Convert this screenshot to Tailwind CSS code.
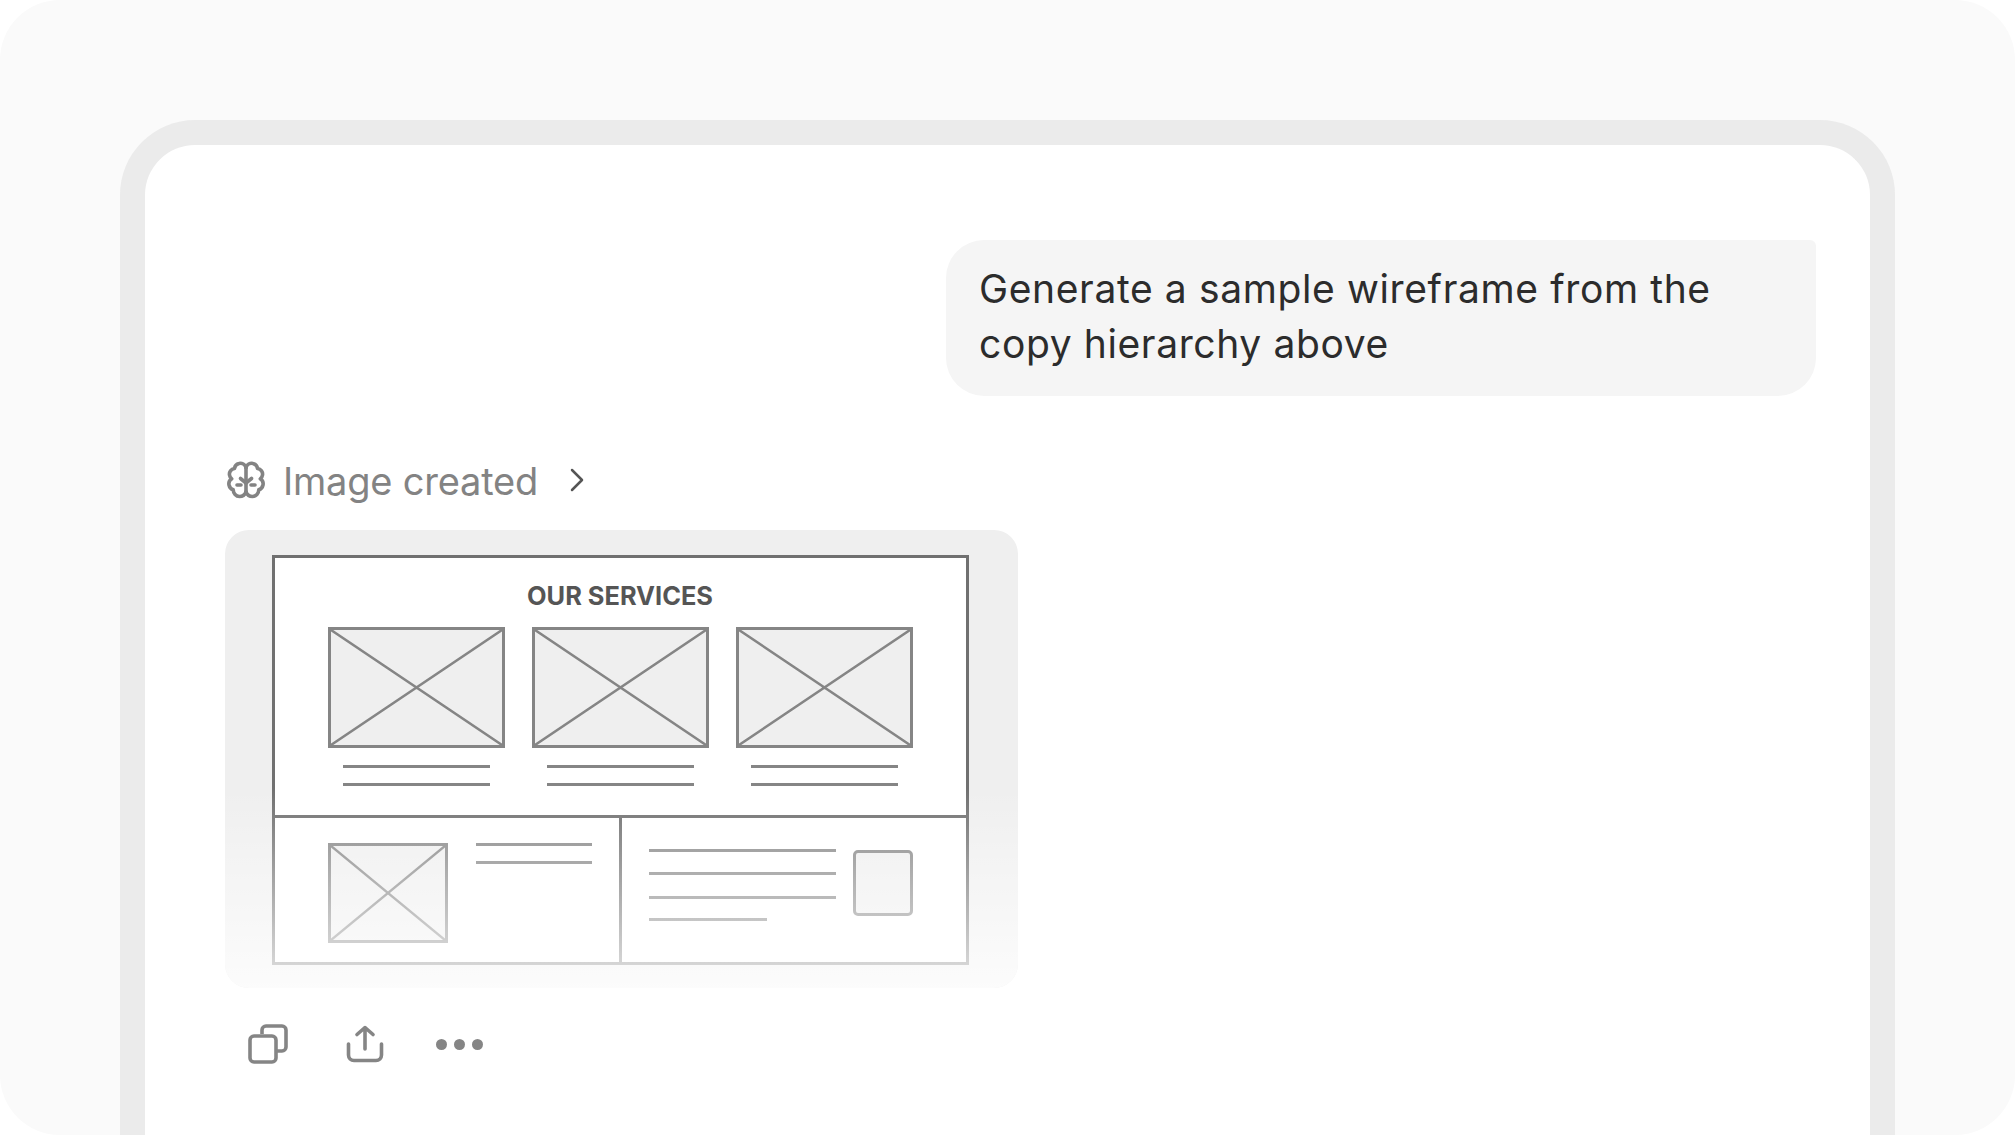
<!DOCTYPE html>
<html lang="en">
<head>
    <meta charset="UTF-8">
    <title>Image created</title>
    <script src="https://cdn.jsdelivr.net/npm/@tailwindcss/browser@4"></script>
</head>
<body class="bg-white font-['Inter',sans-serif] overflow-hidden">
    <div class="w-[2015px] h-[1135px] bg-[#fafafa] rounded-[60px] pt-[120px] px-[120px] overflow-hidden">
        <div class="h-[1015px] bg-white border-[25px] border-b-0 border-[#ebebeb] rounded-t-[75px] pt-[95px] pl-[80px] pr-[54px]">

            <!-- user message -->
            <div class="flex justify-end">
                <div class="w-[870px] h-[156px] bg-[#f5f5f5] rounded-[38px] rounded-tr-[6px] pl-[33px] pt-[21px] text-[39px] leading-[55px] tracking-[0.62px] text-[#2c2c2c]">
                    Generate a sample wireframe from the<br>copy hierarchy above
                </div>
            </div>

            <!-- status -->
            <div class="flex items-center mt-[61px] h-[46px] text-[#838383]">
                <svg class="ml-[2px] w-[38px] h-[38px]" viewBox="0 0 38 38" fill="none" stroke="currentColor" stroke-width="3.6" stroke-linecap="round" stroke-linejoin="round">
                    <g>
                        <path d="M19 6.5C18 3.5 15 1.8 12 2.5C9.5 3 7.8 5 7.5 7.5C4 8 2 11 2.5 14C2.7 15.5 3.5 16.8 4.7 17.8C2.5 19.3 1.5 21.7 2 24C2.5 26.3 4 28 6.2 28.8C6.3 32.5 9 35.5 12.5 35.5C15.5 35.5 18 33.5 19 31"/>
                        <path d="M19 22L13.5 17.5M10 24h4"/>
                    </g>
                    <g transform="matrix(-1 0 0 1 38 0)">
                        <path d="M19 6.5C18 3.5 15 1.8 12 2.5C9.5 3 7.8 5 7.5 7.5C4 8 2 11 2.5 14C2.7 15.5 3.5 16.8 4.7 17.8C2.5 19.3 1.5 21.7 2 24C2.5 26.3 4 28 6.2 28.8C6.3 32.5 9 35.5 12.5 35.5C15.5 35.5 18 33.5 19 31"/>
                        <path d="M19 22L13.5 17.5M10 24h4"/>
                    </g>
                    <path d="M19 7v24"/>
                </svg>
                <span class="ml-[18px] pt-[3px] text-[38px] tracking-[-0.2px]">Image created</span>
                <svg class="ml-[32px] w-[14px] h-[24px] text-[#555555]" viewBox="0 0 14 24" fill="none" stroke="currentColor" stroke-width="2.5" stroke-linecap="round" stroke-linejoin="round">
                    <path d="M2 2l10 10L2 22"/>
                </svg>
            </div>

            <!-- generated image -->
            <div class="relative mt-[27px] w-[793px] h-[458px] bg-[#efefef] rounded-[24px] pt-[25px] pl-[47px] overflow-hidden">
                <div class="w-[697px] h-[410px] bg-white border-[3px] border-[#707070] flex flex-col">
                    <div class="h-[260px] border-b-[3px] border-[#707070] pt-[23px] pl-[53px]">
                        <div class="w-[584px] text-center text-[25.4px] leading-[30px] font-bold text-[#555555]">OUR SERVICES</div>
                        <div class="flex gap-[27px] mt-[16px]">
                            <div class="w-[177px]">
                                <div class="h-[121px] bg-[#efefef] border-[3px] border-[#858585]">
                                    <svg class="w-full h-full" viewBox="0 0 100 100" preserveAspectRatio="none" stroke="#858585" stroke-width="2.5"><path vector-effect="non-scaling-stroke" d="M0 0L100 100M100 0L0 100"/></svg>
                                </div>
                                <div class="mx-[15px] mt-[17px] h-[3px] bg-[#858585]"></div>
                                <div class="mx-[15px] mt-[15px] h-[3px] bg-[#858585]"></div>
                            </div>
                            <div class="w-[177px]">
                                <div class="h-[121px] bg-[#efefef] border-[3px] border-[#858585]">
                                    <svg class="w-full h-full" viewBox="0 0 100 100" preserveAspectRatio="none" stroke="#858585" stroke-width="2.5"><path vector-effect="non-scaling-stroke" d="M0 0L100 100M100 0L0 100"/></svg>
                                </div>
                                <div class="mx-[15px] mt-[17px] h-[3px] bg-[#858585]"></div>
                                <div class="mx-[15px] mt-[15px] h-[3px] bg-[#858585]"></div>
                            </div>
                            <div class="w-[177px]">
                                <div class="h-[121px] bg-[#efefef] border-[3px] border-[#858585]">
                                    <svg class="w-full h-full" viewBox="0 0 100 100" preserveAspectRatio="none" stroke="#858585" stroke-width="2.5"><path vector-effect="non-scaling-stroke" d="M0 0L100 100M100 0L0 100"/></svg>
                                </div>
                                <div class="mx-[15px] mt-[17px] h-[3px] bg-[#858585]"></div>
                                <div class="mx-[15px] mt-[15px] h-[3px] bg-[#858585]"></div>
                            </div>
                        </div>
                    </div>
                    <div class="flex flex-1">
                        <div class="w-[347px] border-r-[3px] border-[#707070] flex pl-[53px] pt-[25px]">
                            <div class="w-[120px] h-[100px] bg-[#efefef] border-[3px] border-[#858585]">
                                <svg class="w-full h-full" viewBox="0 0 100 100" preserveAspectRatio="none" stroke="#858585" stroke-width="2.5"><path vector-effect="non-scaling-stroke" d="M0 0L100 100M100 0L0 100"/></svg>
                            </div>
                            <div class="ml-[28px] w-[116px]">
                                <div class="h-[3px] bg-[#858585]"></div>
                                <div class="mt-[15px] h-[3px] bg-[#858585]"></div>
                            </div>
                        </div>
                        <div class="flex pl-[27px] pt-[31px]">
                            <div class="w-[187px]">
                                <div class="h-[3px] bg-[#858585]"></div>
                                <div class="mt-[20px] h-[3px] bg-[#858585]"></div>
                                <div class="mt-[21px] h-[3px] bg-[#858585]"></div>
                                <div class="mt-[19px] h-[3px] w-[118px] bg-[#858585]"></div>
                            </div>
                            <div class="ml-[17px] mt-[1px] w-[60px] h-[66px] rounded-[5px] bg-[#efefef] border-[3px] border-[#858585]"></div>
                        </div>
                    </div>
                </div>
                <!-- fade over the bottom of the picture -->
                <div class="absolute left-0 right-0 bottom-0 h-[200px] bg-gradient-to-b from-white/0 to-white/80"></div>
            </div>

            <!-- actions -->
            <div class="flex items-center mt-[36px] text-[#858585]">
                <svg class="ml-[23px] w-[40px] h-[40px]" viewBox="0 0 40 40" fill="none" stroke="currentColor" stroke-width="3.6" stroke-linejoin="round">
                    <path d="M14 10V6a4 4 0 0 1 4-4h16a4 4 0 0 1 4 4v17a4 4 0 0 1-4 4h-6"/>
                    <rect x="2" y="12" width="26" height="26" rx="4"/>
                </svg>
                <svg class="ml-[58px] w-[38px] h-[38px]" viewBox="0 0 38 38" fill="none" stroke="currentColor" stroke-width="3.6" stroke-linecap="round" stroke-linejoin="round">
                    <path d="M19 24V2.5M11 9.5L19 2.5l8 7"/>
                    <path d="M2.5 19v11a5.5 5.5 0 0 0 5.5 5.5h22a5.5 5.5 0 0 0 5.5-5.5V19"/>
                </svg>
                <div class="ml-[52px] flex gap-[7px]">
                    <div class="w-[11px] h-[11px] rounded-full bg-[#858585]"></div>
                    <div class="w-[11px] h-[11px] rounded-full bg-[#858585]"></div>
                    <div class="w-[11px] h-[11px] rounded-full bg-[#858585]"></div>
                </div>
            </div>
        </div>
    </div>
</body>
</html>
